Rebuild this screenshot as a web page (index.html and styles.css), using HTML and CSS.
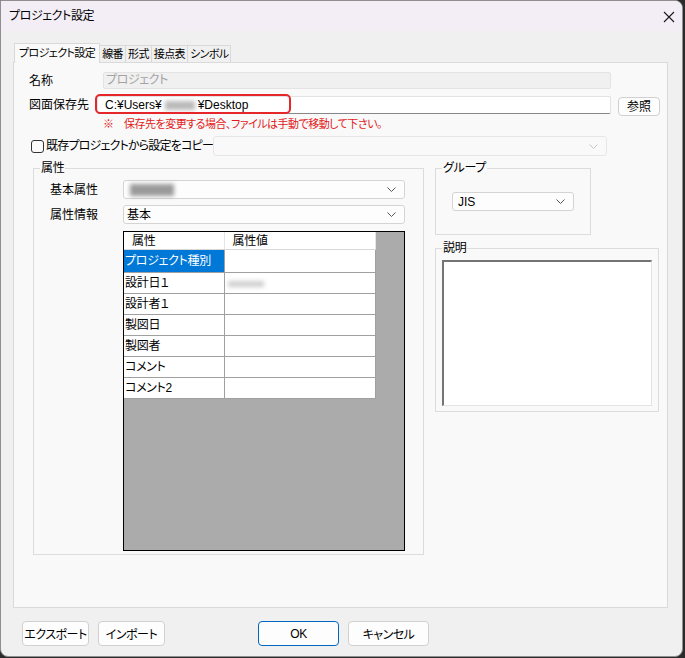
FILE: index.html
```html
<!DOCTYPE html>
<html lang="ja">
<head>
  <meta charset="UTF-8">
  <title>プロジェクト設定</title>
  <link rel="stylesheet" href="styles.css">
</head>
<body>
  <div class="window">

    <!-- Title bar -->
    <div class="titlebar">
      <span class="title">プロジェクト設定</span>
      <svg class="close" width="12" height="12" viewBox="0 0 12 12">
        <path d="M1 1 L11 11 M11 1 L1 11" stroke="#1a1a1a" stroke-width="1.1" fill="none"/>
      </svg>
    </div>

    <div class="dialog-body">
      <!-- Tabs -->
      <div class="tabs">
        <div class="tab active">プロジェクト設定</div>
        <div class="tab">線番</div>
        <div class="tab">形式</div>
        <div class="tab">接点表</div>
        <div class="tab">シンボル</div>
      </div>

      <div class="panel">
        <div class="row name-row">
          <span class="label label-name">名称</span>
          <div class="input disabled">プロジェクト</div>
        </div>

        <div class="row path-row">
          <span class="label label-path">図面保存先</span>
          <div class="input path-input">
            C:¥Users¥<span class="blur blur-user"></span>¥Desktop
            <div class="mark"></div>
          </div>
          <button class="btn btn-browse">参照</button>
        </div>

        <div class="note">※　保存先を変更する場合、ファイルは手動で移動して下さい。</div>

        <div class="row copy-row">
          <span class="checkbox"></span>
          <span class="copy-label">既存プロジェクトから設定をコピー</span>
          <div class="combo combo-copy">
            <svg class="chev" width="9" height="5" viewBox="0 0 9 5"><path d="M0.5 0.5 L4.5 4.5 L8.5 0.5" stroke="#c4c4c4" fill="none"/></svg>
          </div>
        </div>

        <div class="lower">
          <!-- 属性 -->
          <fieldset class="group attr-group">
            <legend>属性</legend>
            <div class="row attr-row first">
              <span class="label label-attr">基本属性</span>
              <div class="combo combo-attr">
                <span class="blur blur-attr"></span>
                <svg class="chev" width="9" height="5" viewBox="0 0 9 5"><path d="M0.5 0.5 L4.5 4.5 L8.5 0.5" stroke="#555" fill="none"/></svg>
              </div>
            </div>
            <div class="row attr-row">
              <span class="label label-attr">属性情報</span>
              <div class="combo combo-attr">
                <span class="combo-text">基本</span>
                <svg class="chev" width="9" height="5" viewBox="0 0 9 5"><path d="M0.5 0.5 L4.5 4.5 L8.5 0.5" stroke="#555" fill="none"/></svg>
              </div>
            </div>
            <div class="grid">
              <table>
                <colgroup><col class="c1"><col class="c2"></colgroup>
                <thead>
                  <tr><th>属性</th><th>属性値</th></tr>
                </thead>
                <tbody>
                  <tr class="first-row"><td class="selected">プロジェクト種別</td><td></td></tr>
                  <tr><td>設計日１</td><td><span class="blur blur-cell"></span></td></tr>
                  <tr><td>設計者１</td><td></td></tr>
                  <tr><td>製図日</td><td></td></tr>
                  <tr><td>製図者</td><td></td></tr>
                  <tr><td>コメント</td><td></td></tr>
                  <tr><td>コメント2</td><td></td></tr>
                </tbody>
              </table>
            </div>
          </fieldset>

          <div class="right-col">
            <fieldset class="group group-box">
              <legend>グループ</legend>
              <div class="combo combo-group">
                <span class="combo-text latin">JIS</span>
                <svg class="chev" width="9" height="5" viewBox="0 0 9 5"><path d="M0.5 0.5 L4.5 4.5 L8.5 0.5" stroke="#555" fill="none"/></svg>
              </div>
            </fieldset>
            <fieldset class="group desc-box">
              <legend>説明</legend>
              <div class="textarea"></div>
            </fieldset>
          </div>
        </div>
      </div>

      <!-- Footer buttons -->
      <div class="footer">
        <button class="btn btn-small">エクスポート</button>
        <button class="btn btn-small">インポート</button>
        <button class="btn btn-wide btn-ok">OK</button>
        <button class="btn btn-wide">キャンセル</button>
      </div>
    </div>
  </div>
</body>
</html>
```

FILE: styles.css
```css
/* Global */
body {
  margin: 0;
  background: #2b2b2b;
  font-family: "Liberation Sans", "Noto Sans CJK JP", sans-serif;
  font-size: 12px;
  color: #000;
  font-feature-settings: "palt";
}

.window {
  width: 683px;
  height: 657px;
  box-sizing: border-box;
  background: #f0f0f0;
  border: 1px solid #8f8f8f;
  border-radius: 0 8px 8px 8px;
  overflow: hidden;
}

/* Title bar */
.titlebar {
  height: 30px;
  background: #f3eef6;
  display: flex;
  align-items: center;
  justify-content: space-between;
  padding: 0 7px 0 8px;
}
.title { line-height: 14px; letter-spacing: -0.4px; }
.close { margin-top: 1px; }

.dialog-body {
  padding: 12px 0 0 12px;
}

/* Tabs */
.tabs {
  display: flex;
  height: 19px;
  padding-left: 1px;
  position: relative;
  z-index: 1;
}
.tab {
  box-sizing: border-box;
  height: 17px;
  margin-top: 2px;
  padding: 0 2px;
  line-height: 16px;
  font-size: 11px;
  letter-spacing: -0.6px;
  white-space: nowrap;
  border: 1px solid #d9d9d9;
  border-bottom: none;
  margin-left: -1px;
  background: #f0f0f0;
}
.tab:first-child { margin-left: 0; }
.tab.active {
  height: 20px;
  margin-top: 0;
  padding: 0 4px;
  line-height: 19px;
  background: #f9f9f9;
}

.panel {
  box-sizing: border-box;
  width: 655px;
  height: 546px;
  background: #f9f9f9;
  border: 1px solid #dadada;
}

.row {
  display: flex;
  align-items: center;
}
.label { line-height: 14px; white-space: nowrap; flex-shrink: 0; }

/* 名称 */
.name-row { margin-top: 9px; padding-left: 15px; }
.label-name { width: 74px; }
.input {
  box-sizing: border-box;
  height: 17px;
  line-height: 15px;
  padding-left: 2px;
  border: 1px solid #e3e3e3;
  background: #fff;
  border-radius: 2px;
  white-space: nowrap;
}
.input.disabled {
  width: 508px;
  background: #f0f0f0;
  color: #a3a3a3;
  letter-spacing: -0.4px;
}

/* 図面保存先 */
.path-row { margin-top: 7px; padding-left: 15px; align-items: flex-start; }
.label-path { width: 68px; margin-top: 2px; }
.path-input {
  position: relative;
  width: 514px;
  height: 18px;
  line-height: 16px;
  padding-left: 7px;
  border-bottom-color: #878787;
}
.mark {
  position: absolute;
  left: -3px;
  top: -3px;
  width: 192px;
  height: 16px;
  border: 2px solid #e5262b;
  border-radius: 5px;
}
.blur {
  display: inline-block;
  vertical-align: middle;
  background: #b9b9b9;
  filter: blur(2px);
}
.blur-user { width: 30px; height: 9px; margin: 0 3px; }

.btn {
  box-sizing: border-box;
  font-family: inherit;
  font-size: 12px;
  background: #fdfdfd;
  border: 1px solid #d0d0d0;
  border-radius: 4px;
  padding: 0;
  color: #000;
  white-space: nowrap;
  font-feature-settings: "palt";
}
.btn-browse {
  width: 42px;
  height: 19px;
  margin: 1px 0 0 7px;
  line-height: 16px;
}

.note {
  margin-top: 1px;
  padding-left: 89px;
  line-height: 14px;
  font-size: 11px;
  letter-spacing: -0.5px;
  color: #e31a1a;
}

/* コピー */
.copy-row { margin-top: 5px; padding: 0 60px 0 17px; }
.checkbox {
  box-sizing: border-box;
  flex-shrink: 0;
  width: 13px;
  height: 13px;
  border: 1px solid #333;
  border-radius: 3px;
  background: #fbfbfb;
}
.copy-label {
  margin-left: 2px;
  line-height: 14px;
  white-space: nowrap;
  letter-spacing: -0.8px;
}
.combo {
  box-sizing: border-box;
  position: relative;
  display: flex;
  align-items: center;
  height: 19px;
  border: 1px solid #d4d4d4;
  border-radius: 3px;
  background: #fdfdfd;
}
.combo-copy {
  flex-shrink: 0;
  width: 394px;
  height: 20px;
  margin-left: auto;
  border-color: #e6e6e6;
  background: #f9f9f9;
}
.chev { margin-left: auto; margin-right: 8px; }
.combo-text { padding-left: 3px; line-height: 14px; }
.latin { padding-left: 5px; }

/* Lower area */
.lower {
  display: flex;
  gap: 11px;
  margin-top: 5px;
  padding-left: 19px;
}
.group {
  box-sizing: border-box;
  margin: 0;
  padding: 0;
  min-width: 0;
  border: 1px solid #dcdcdc;
}
.group legend {
  margin-left: 6px;
  padding: 0 1px;
  line-height: 14px;
  letter-spacing: -0.3px;
}
.attr-group { width: 391px; height: 394px; }
.attr-row { margin-top: 6px; padding-left: 16px; }
.attr-row.first { margin-top: 5px; }
.label-attr { width: 73px; }
.combo-attr { width: 282px; }
.blur-attr { width: 44px; height: 12px; margin-left: 6px; background: #9a9a9a; }

/* Grid */
.grid {
  box-sizing: border-box;
  width: 282px;
  height: 320px;
  margin: 7px 0 0 89px;
  background: #ababab;
  border: 1px solid #000;
}
.grid table {
  border-collapse: collapse;
  background: #fff;
  width: 251px;
  table-layout: fixed;
}
.grid col.c1 { width: 100px; }
.grid col.c2 { width: 151px; }
.grid th,
.grid td {
  padding: 0 1px;
  text-align: left;
  font-weight: normal;
  line-height: 14px;
  white-space: nowrap;
  overflow: hidden;
  letter-spacing: -0.3px;
}
.grid th {
  height: 17px;
  padding-left: 8px;
  border-right: 1px solid #e6e6e6;
  border-bottom: 1px solid #d8d8d8;
}
.grid td {
  height: 20px;
  border: 1px solid #a0a0a0;
  border-top: none;
  border-left: none;
}
.grid .first-row td { height: 22px; }
.grid td.selected { background: #0078d7; color: #fff; }
.blur-cell { width: 36px; height: 6px; margin-left: 2px; background: #cfcfcf; }

/* Right column */
.right-col { display: flex; flex-direction: column; }
.group-box { width: 156px; height: 74px; }
.combo-group { width: 122px; margin: 17px 0 0 16px; }
.desc-box { width: 224px; height: 171px; margin-top: 6px; }
.textarea {
  box-sizing: border-box;
  width: 210px;
  height: 146px;
  margin: 5px 0 0 6px;
  background: #fff;
  border: 1px solid #e3e3e3;
  border-top: 2px solid #747474;
  border-left: 2px solid #747474;
}

/* Footer */
.footer {
  display: flex;
  gap: 9px;
  margin-top: 13px;
  padding-left: 9px;
}
.footer .btn { height: 25px; letter-spacing: -0.5px; }
.btn-small { width: 67px; }
.btn-wide { width: 81px; }
.btn-ok { margin-left: 84px; border-color: #0067c0; }
```
